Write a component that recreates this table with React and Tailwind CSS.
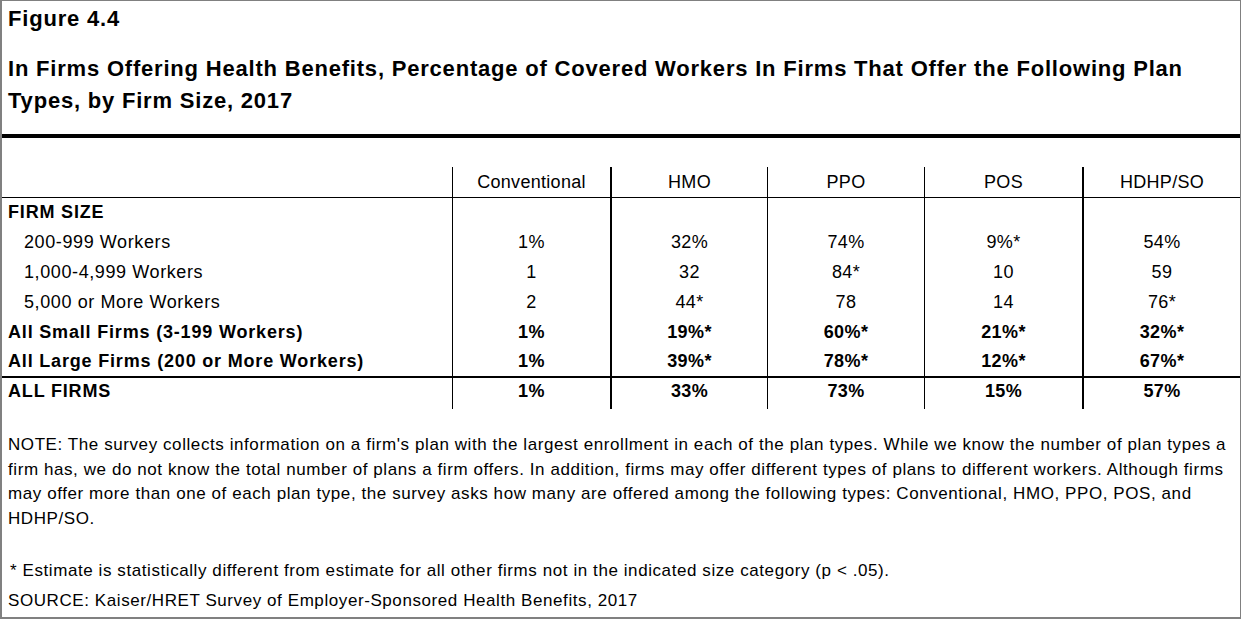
// App.jsx
const font = { fontFamily: "'Liberation Sans', Arial, sans-serif" }

const columns = ["Conventional", "HMO", "PPO", "POS", "HDHP/SO"]

// borde izquierdo de cada columna de datos
const colBorders = [
  "border-l border-black",
  "border-l-2 border-black",
  "border-l border-black",
  "border-l border-black",
  "border-l-2 border-black",
]

const rows = [
  { label: "FIRM SIZE", bold: true, values: ["", "", "", "", ""], h: "h-[29px]" },
  { label: "200-999 Workers", indent: true, values: ["1%", "32%", "74%", "9%*", "54%"], h: "h-[30px]" },
  { label: "1,000-4,999 Workers", indent: true, values: ["1", "32", "84*", "10", "59"], h: "h-[30px]" },
  { label: "5,000 or More Workers", indent: true, values: ["2", "44*", "78", "14", "76*"], h: "h-[30px]" },
  { label: "All Small Firms (3-199 Workers)", bold: true, values: ["1%", "19%*", "60%*", "21%*", "32%*"], h: "h-[30px]" },
  { label: "All Large Firms (200 or More Workers)", bold: true, values: ["1%", "39%*", "78%*", "12%*", "67%*"], h: "h-[29px]" },
]

function Row({ row }) {
  return (
    <div className={`grid grid-cols-[450px_158px_157px_157px_158px_158px] ${row.h}`}>
      <div
        className={`flex items-center text-[18px] text-black whitespace-nowrap ${
          row.bold ? "font-bold tracking-[0.82px]" : "tracking-[0.6px]"
        } ${row.indent ? "pl-[22px]" : "pl-[6px]"} ${row.pb || ""}`}
      >
        {row.label}
      </div>
      {row.values.map((v, i) => (
        <div
          key={i}
          className={`flex items-center justify-center text-[18px] tracking-[0.4px] text-black ${colBorders[i]} ${
            row.bold ? "font-bold" : ""
          } ${row.pb || ""}`}
        >
          {v}
        </div>
      ))}
    </div>
  )
}

export default function App() {
  return (
    <div
      style={font}
      className="w-[1241px] h-[619px] bg-white border-t border-l-2 border-r border-b-2 border-[#808080] flex flex-col overflow-hidden"
    >
      {/* Titulo */}
      <div className="px-[6px] pt-[6px] tracking-[0.8px] whitespace-nowrap">
        <div className="text-[22px] font-bold text-black leading-[24px]">Figure 4.4</div>
        <div className="mt-[22px] text-[22px] font-bold text-black leading-[32px]">
          In Firms Offering Health Benefits, Percentage of Covered Workers In Firms That Offer the Following Plan
          <br />
          Types, by Firm Size, 2017
        </div>
      </div>
      <div className="mt-[17px] h-[4px] bg-black" />

      {/* Tabla */}
      <div className="mt-[29px]">
        <div className="grid grid-cols-[450px_158px_157px_157px_158px_158px] h-[31px] border-b border-black">
          <div />
          {columns.map((c, i) => (
            <div
              key={c}
              className={`flex items-center justify-center text-[18px] tracking-[0.3px] text-black ${colBorders[i]}`}
            >
              {c}
            </div>
          ))}
        </div>
        {rows.map((r) => (
          <Row key={r.label} row={r} />
        ))}
        <div className="h-[2px] bg-black" />
        <Row
          row={{
            label: "ALL FIRMS",
            bold: true,
            values: ["1%", "33%", "73%", "15%", "57%"],
            h: "h-[30px]",
            pb: "pb-[4px]",
          }}
        />
      </div>

      {/* Notas */}
      <div className="px-[6px] mt-[25px] text-[17px] tracking-[0.58px] text-black leading-[24.5px] whitespace-nowrap">
        <div>
          NOTE: The survey collects information on a firm's plan with the largest enrollment in each of the plan types. While we know the number of plan types a
        </div>
        <div>
          firm has, we do not know the total number of plans a firm offers. In addition, firms may offer different types of plans to different workers. Although firms
        </div>
        <div>
          may offer more than one of each plan type, the survey asks how many are offered among the following types: Conventional, HMO, PPO, POS, and
        </div>
        <div>HDHP/SO.</div>
        <div className="mt-[28px] pl-[2px]">
          * Estimate is statistically different from estimate for all other firms not in the indicated size category (p &lt; .05).
        </div>
        <div className="mt-[5px]">SOURCE: Kaiser/HRET Survey of Employer-Sponsored Health Benefits, 2017</div>
      </div>
    </div>
  )
}
